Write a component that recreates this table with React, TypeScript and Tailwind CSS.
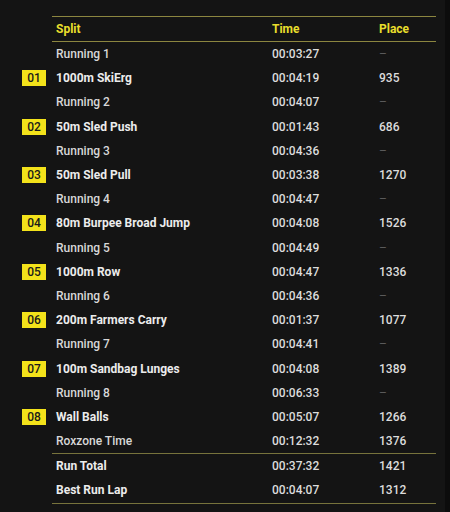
import React from "react";

type Row = { badge?: string; name: string; time: string; place: string };

const rows: Row[] = [
  { name: "Running 1", time: "00:03:27", place: "–" },
  { badge: "01", name: "1000m SkiErg", time: "00:04:19", place: "935" },
  { name: "Running 2", time: "00:04:07", place: "–" },
  { badge: "02", name: "50m Sled Push", time: "00:01:43", place: "686" },
  { name: "Running 3", time: "00:04:36", place: "–" },
  { badge: "03", name: "50m Sled Pull", time: "00:03:38", place: "1270" },
  { name: "Running 4", time: "00:04:47", place: "–" },
  { badge: "04", name: "80m Burpee Broad Jump", time: "00:04:08", place: "1526" },
  { name: "Running 5", time: "00:04:49", place: "–" },
  { badge: "05", name: "1000m Row", time: "00:04:47", place: "1336" },
  { name: "Running 6", time: "00:04:36", place: "–" },
  { badge: "06", name: "200m Farmers Carry", time: "00:01:37", place: "1077" },
  { name: "Running 7", time: "00:04:41", place: "–" },
  { badge: "07", name: "100m Sandbag Lunges", time: "00:04:08", place: "1389" },
  { name: "Running 8", time: "00:06:33", place: "–" },
  { badge: "08", name: "Wall Balls", time: "00:05:07", place: "1266" },
  { name: "Roxzone Time", time: "00:12:32", place: "1376" },
];

const totals: Row[] = [
  { name: "Run Total", time: "00:37:32", place: "1421" },
  { name: "Best Run Lap", time: "00:04:07", place: "1312" },
];

function TableRow({ row, bold }: { row: Row; bold: boolean }) {
  const dash = row.place === "–";
  return (
    <div className="flex h-[24.2px] items-center">
      <div className="w-[30px] shrink-0">
        {row.badge && (
          <div className="flex h-4 w-6 items-center justify-center bg-[#f3e21a] text-[12px] font-medium text-[#1a1a1a]">
            {row.badge}
          </div>
        )}
      </div>
      <div className="grid w-[384px] grid-cols-[220px_107px_57px] items-center">
        <div className={`pl-1 ${bold ? "font-bold text-[#ececec]" : "font-medium text-[#d8d8d8]"}`}>{row.name}</div>
        <div className="font-medium text-[#dcdcdc]">{row.time}</div>
        <div className={dash ? "text-[#5a5a5a]" : "font-medium text-[#dcdcdc]"}>{row.place}</div>
      </div>
    </div>
  );
}

export default function App() {
  return (
    <div className="flex h-[512px] w-[450px] bg-[#0c0c0c] font-['Roboto',sans-serif] text-[12px]">
      <div className="w-[445px] bg-[#141414] pl-[22px] pt-4">
        {/* header */}
        <div className="ml-[30px] w-[384px] border-y border-[#8c8640]">
          <div className="grid h-6 grid-cols-[220px_107px_57px] items-center font-bold text-[#e8de2c]">
            <div className="pl-1">Split</div>
            <div>Time</div>
            <div>Place</div>
          </div>
        </div>

        {rows.map((r, i) => (
          <TableRow key={i} row={r} bold={!!r.badge} />
        ))}

        <div className="ml-[30px] w-[384px] border-t border-[#77733c]" />
        {totals.map((r, i) => (
          <TableRow key={i} row={r} bold />
        ))}
        <div className="ml-[30px] w-[384px] border-t border-[#77733c]" />
      </div>
    </div>
  );
}
